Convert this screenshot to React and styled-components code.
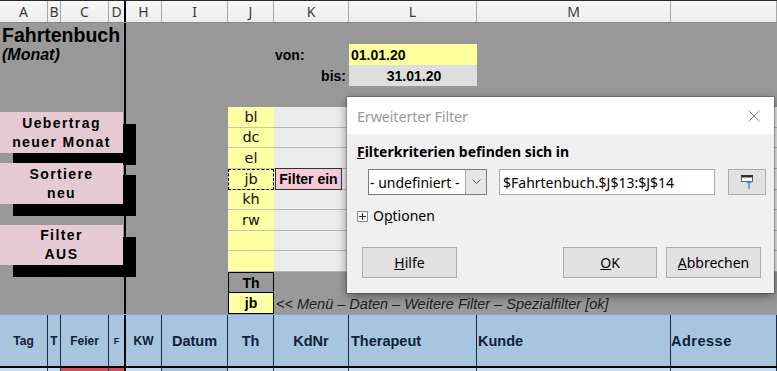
import styled, { createGlobalStyle } from 'styled-components';

const GlobalStyle = createGlobalStyle`
  html, body {
    margin: 0;
    padding: 0;
    overflow: hidden;
    background: #999999;
  }
  * {
    box-sizing: border-box;
  }
`;

const COLS = '48px 13px 48px 17px 36px 66px 46px 75px 128px 194px 106px';
const RIGHT_COLS = '36px 66px 46px 75px 128px 194px 106px';

const Page = styled.div`
  position: relative;
  width: 777px;
  height: 371px;
  overflow: hidden;
  background: #999999;
  font-family: 'Liberation Sans', Arial, sans-serif;
  color: #000;
`;

/* column letters */
const ColumnBar = styled.div`
  display: grid;
  grid-template-columns: ${COLS};
  height: 23px;
  border-top: 1px solid #2b2b2b;
  border-bottom: 1px solid #8a8a8a;
  background: linear-gradient(#f8f8f8, #ececec);
`;

const ColumnLetter = styled.div`
  display: flex;
  align-items: center;
  justify-content: center;
  border-right: ${(p) => (p.$freeze ? '2px solid #000' : '1px solid #a8a8a8')};
  font-family: 'Noto Sans', sans-serif;
  font-size: 14px;
  color: #3a3a3a;
`;

/* upper sheet area */
const Sheet = styled.div`
  display: flex;
  height: 291px;
`;

const LeftPane = styled.div`
  width: 126px;
  flex: none;
  border-right: 2px solid #000;
  display: flex;
  flex-direction: column;
  align-items: flex-start;
`;

const Title = styled.div`
  margin: 1px 0 0 2px;
  font-size: 19.5px;
  font-weight: bold;
  line-height: 22px;
`;

const Subtitle = styled.div`
  margin-left: 2px;
  font-size: 16px;
  font-weight: bold;
  font-style: italic;
  line-height: 18px;
`;

const MacroButton = styled.div`
  width: 123px;
  height: ${(p) => p.$h}px;
  margin-top: ${(p) => p.$top}px;
  background: #e5cad4;
  box-shadow: 13px 12px 0 #000;
  display: flex;
  flex-direction: column;
  align-items: center;
  justify-content: center;
  font-size: 14px;
  font-weight: bold;
  letter-spacing: 1.4px;
  line-height: 19px;
`;

const RightGrid = styled.div`
  flex: 1;
  display: grid;
  grid-template-columns: ${RIGHT_COLS};
  grid-template-rows: repeat(4, 21px) repeat(8, 20.625px) 21px 21px;
`;

const FieldLabel = styled.div`
  grid-column: 4;
  grid-row: ${(p) => p.$row};
  display: flex;
  align-items: center;
  justify-content: ${(p) => (p.$right ? 'flex-end' : 'flex-start')};
  padding: 0 3px 0 1px;
  font-size: 14px;
  font-weight: bold;
`;

const DateCell = styled.div`
  grid-column: 5;
  grid-row: ${(p) => p.$row};
  display: flex;
  align-items: center;
  justify-content: ${(p) => (p.$center ? 'center' : 'flex-start')};
  padding-left: 2px;
  background: ${(p) => p.$bg};
  font-size: 14px;
  font-weight: bold;
`;

const CritKey = styled.div`
  position: relative;
  grid-column: 3;
  grid-row: ${(p) => p.$row};
  display: flex;
  align-items: center;
  justify-content: center;
  background: #ffffa4;
  border-bottom: 1px solid #c9c9a6;
  font-family: 'DejaVu Sans', sans-serif;
  font-size: 14.5px;
  color: #111;
  outline: ${(p) => (p.$selected ? '1px dashed #000' : 'none')};
  outline-offset: -1px;
  z-index: ${(p) => (p.$selected ? 1 : 0)};
`;

const CritRest = styled.div`
  grid-column: 4 / -1;
  grid-row: ${(p) => p.$row};
  display: flex;
  align-items: center;
  padding-left: 1px;
  background: #ececec;
  border-bottom: 1px solid #b7b7b7;
`;

const FilterButton = styled.div`
  width: 67px;
  height: 22px;
  display: flex;
  align-items: center;
  justify-content: center;
  border: 1px solid #333;
  background: #f3cbd6;
  font-size: 14px;
  font-weight: bold;
`;

const ResultCell = styled.div`
  grid-column: 3;
  grid-row: ${(p) => p.$row};
  display: flex;
  align-items: center;
  justify-content: center;
  background: ${(p) => p.$bg};
  border: 1px solid #000;
  border-top: ${(p) => (p.$first ? '1px solid #000' : 'none')};
  font-size: 14px;
  font-weight: bold;
`;

const Hint = styled.div`
  grid-column: 4 / -1;
  grid-row: 14;
  display: flex;
  align-items: center;
  padding-left: 2px;
  font-size: 14.5px;
  font-style: italic;
  color: #1e1e1e;
  white-space: nowrap;
`;

/* blue table header */
const TableHead = styled.div`
  display: grid;
  grid-template-columns: ${COLS};
  height: 52px;
  background: #a8c5e0;
  border-top: 1px solid #7ca6d2;
`;

const HeadCell = styled.div`
  display: flex;
  align-items: center;
  justify-content: ${(p) => (p.$left ? 'flex-start' : 'center')};
  padding-left: ${(p) => p.$pad || 0}px;
  border-right: ${(p) => (p.$freeze ? '2px solid #000' : '1px solid #1c2b42')};
  font-size: ${(p) => p.$size}px;
  font-weight: bold;
  letter-spacing: ${(p) => p.$spacing || 0}px;
  color: #0f203a;
`;

const DataRow = styled.div`
  display: grid;
  grid-template-columns: ${COLS};
  height: 30px;
  border-top: 2px solid #000;
`;

const DataCell = styled.div`
  background: ${(p) => p.$bg || '#c7dcf2'};
  border-right: ${(p) => (p.$freeze ? '2px solid #000' : '1px solid #2a3850')};
`;

/* dialog */
const Dialog = styled.div`
  position: absolute;
  left: 347px;
  top: 97px;
  width: 427px;
  height: 196px;
  display: flex;
  flex-direction: column;
  background: #f0f0f0;
  box-shadow: 0 0 0 1px rgba(0, 0, 0, 0.22), 0 3px 10px rgba(0, 0, 0, 0.45);
  font-family: 'Noto Sans', sans-serif;
  font-size: 14px;
  color: #000;
`;

const TitleBar = styled.div`
  height: 37px;
  flex: none;
  display: flex;
  align-items: center;
  justify-content: space-between;
  padding: 0 14px 0 10px;
  background: #fff;
`;

const DialogTitle = styled.span`
  font-size: 14.5px;
  letter-spacing: -0.2px;
  color: #9a9a9a;
`;

const DialogBody = styled.div`
  flex: 1;
  display: flex;
  flex-direction: column;
  padding: 8px 8px 15px 10px;
`;

const Heading = styled.div`
  font-weight: bold;
  line-height: 20px;
`;

const FieldRow = styled.div`
  display: flex;
  height: 26px;
  margin-top: 7px;
  padding-left: 11px;
`;

const Combo = styled.div`
  width: 119px;
  display: flex;
  background: #fff;
  border: 1px solid #7a7a7a;
`;

const ComboText = styled.div`
  flex: 1;
  display: flex;
  align-items: center;
  padding-left: 1px;
  white-space: nowrap;
`;

const ComboArrow = styled.div`
  width: 21px;
  display: flex;
  align-items: center;
  justify-content: center;
  background: #e6e6e6;
  border-left: 1px solid #a8a8a8;
`;

const TextInput = styled.div`
  width: 216px;
  margin-left: 12px;
  display: flex;
  align-items: center;
  padding-left: 3px;
  background: #fff;
  border: 1px solid #a9a9a9;
  white-space: nowrap;
`;

const ShrinkButton = styled.div`
  width: 38px;
  margin-left: 13px;
  display: flex;
  align-items: center;
  justify-content: center;
  background: #e1e1e1;
  border: 1px solid #adadad;
`;

const OptionsRow = styled.div`
  display: flex;
  align-items: center;
  margin-top: 11px;
  line-height: 20px;
`;

const PlusBox = styled.span`
  width: 11px;
  height: 11px;
  margin-right: 5px;
  display: flex;
  align-items: center;
  justify-content: center;
  border: 1px solid #8a8a8a;
  background: #f6f6f6;
`;

const ButtonRow = styled.div`
  display: flex;
  margin-top: 21px;
  padding: 0 5px;
  gap: 9px;
`;

const Spacer = styled.div`
  flex: 1;
`;

const DialogButton = styled.div`
  width: ${(p) => p.$w}px;
  height: 31px;
  display: flex;
  align-items: center;
  justify-content: center;
  background: #e1e1e1;
  border: 1px solid #adadad;
`;

const letters = ['A', 'B', 'C', 'D', 'H', 'I', 'J', 'K', 'L', 'M', ''];
const criteria = ['bl', 'dc', 'el', 'jb', 'kh', 'rw', '', ''];

const App = () => {
  return (
    <Page>
      <GlobalStyle />
      <ColumnBar>
        {letters.map((l, i) => (
          <ColumnLetter key={i} $freeze={l === 'D'}>
            {l}
          </ColumnLetter>
        ))}
      </ColumnBar>

      <Sheet>
        <LeftPane>
          <Title>Fahrtenbuch</Title>
          <Subtitle>(Monat)</Subtitle>
          <MacroButton $top={48} $h={41}>
            <span>Uebertrag</span>
            <span>neuer Monat</span>
          </MacroButton>
          <MacroButton $top={10} $h={41}>
            <span>Sortiere</span>
            <span>neu</span>
          </MacroButton>
          <MacroButton $top={21} $h={40}>
            <span>Filter</span>
            <span>AUS</span>
          </MacroButton>
        </LeftPane>

        <RightGrid>
          <FieldLabel $row={2}>von:</FieldLabel>
          <DateCell $row={2} $bg="#ffff9e">01.01.20</DateCell>
          <FieldLabel $row={3} $right>bis:</FieldLabel>
          <DateCell $row={3} $bg="#dedede" $center>31.01.20</DateCell>

          {criteria.map((c, i) => (
            <CritKey key={'k' + i} $row={5 + i} $selected={c === 'jb'}>
              {c}
            </CritKey>
          ))}
          {criteria.map((c, i) => (
            <CritRest key={'r' + i} $row={5 + i}>
              {c === 'jb' && <FilterButton>Filter ein</FilterButton>}
            </CritRest>
          ))}

          <ResultCell $row={13} $bg="transparent" $first>Th</ResultCell>
          <ResultCell $row={14} $bg="#ffffa4">jb</ResultCell>
          <Hint>&lt;&lt; Menü – Daten – Weitere Filter – Spezialfilter [ok]</Hint>
        </RightGrid>
      </Sheet>

      <TableHead>
        <HeadCell $size={12}>Tag</HeadCell>
        <HeadCell $size={12}>T</HeadCell>
        <HeadCell $size={12}>Feier</HeadCell>
        <HeadCell $size={9} $freeze>F</HeadCell>
        <HeadCell $size={12}>KW</HeadCell>
        <HeadCell $size={14.5}>Datum</HeadCell>
        <HeadCell $size={14.5}>Th</HeadCell>
        <HeadCell $size={14.5}>KdNr</HeadCell>
        <HeadCell $size={14.5} $left $pad={2}>Therapeut</HeadCell>
        <HeadCell $size={14.5} $left $pad={1}>Kunde</HeadCell>
        <HeadCell $size={14.5} $left $spacing={0.5}>Adresse</HeadCell>
      </TableHead>

      <DataRow>
        <DataCell />
        <DataCell />
        <DataCell $bg="#c8505f" />
        <DataCell $bg="#c8505f" $freeze />
        <DataCell />
        <DataCell $bg="#a9c1db" />
        <DataCell />
        <DataCell />
        <DataCell />
        <DataCell />
        <DataCell />
      </DataRow>

      <Dialog>
        <TitleBar>
          <DialogTitle>Erweiterter Filter</DialogTitle>
          <svg width="12" height="12" viewBox="0 0 12 12">
            <path d="M0.5 0.5 L11.5 11.5 M11.5 0.5 L0.5 11.5" stroke="#8a8a8a" strokeWidth="1" />
          </svg>
        </TitleBar>
        <DialogBody>
          <Heading>
            <u>F</u>ilterkriterien befinden sich in
          </Heading>
          <FieldRow>
            <Combo>
              <ComboText>- undefiniert -</ComboText>
              <ComboArrow>
                <svg width="9" height="6" viewBox="0 0 9 6">
                  <path d="M0.5 0.5 L4.5 4.5 L8.5 0.5" stroke="#555" fill="none" strokeWidth="1" />
                </svg>
              </ComboArrow>
            </Combo>
            <TextInput>$Fahrtenbuch.$J$13:$J$14</TextInput>
            <ShrinkButton>
              <svg width="12" height="14" viewBox="0 0 12 14">
                <rect x="0.5" y="0.5" width="11" height="6" fill="#fff" stroke="#666" />
                <rect x="0" y="0" width="12" height="2.5" fill="#333" />
                <path d="M8 14 L8 6 M6 8 L8 6 L10 8" stroke="#3c7bd0" strokeWidth="1.2" fill="none" />
              </svg>
            </ShrinkButton>
          </FieldRow>
          <OptionsRow>
            <PlusBox>
              <svg width="7" height="7" viewBox="0 0 7 7">
                <path d="M0 3.5 L7 3.5 M3.5 0 L3.5 7" stroke="#333" strokeWidth="1" />
              </svg>
            </PlusBox>
            <span>
              O<u>p</u>tionen
            </span>
          </OptionsRow>
          <ButtonRow>
            <DialogButton $w={95}>
              <span>
                <u>H</u>ilfe
              </span>
            </DialogButton>
            <Spacer />
            <DialogButton $w={94}>
              <span>
                <u>O</u>K
              </span>
            </DialogButton>
            <DialogButton $w={95}>
              <span>
                <u>A</u>bbrechen
              </span>
            </DialogButton>
          </ButtonRow>
        </DialogBody>
      </Dialog>
    </Page>
  );
};

export default App;
